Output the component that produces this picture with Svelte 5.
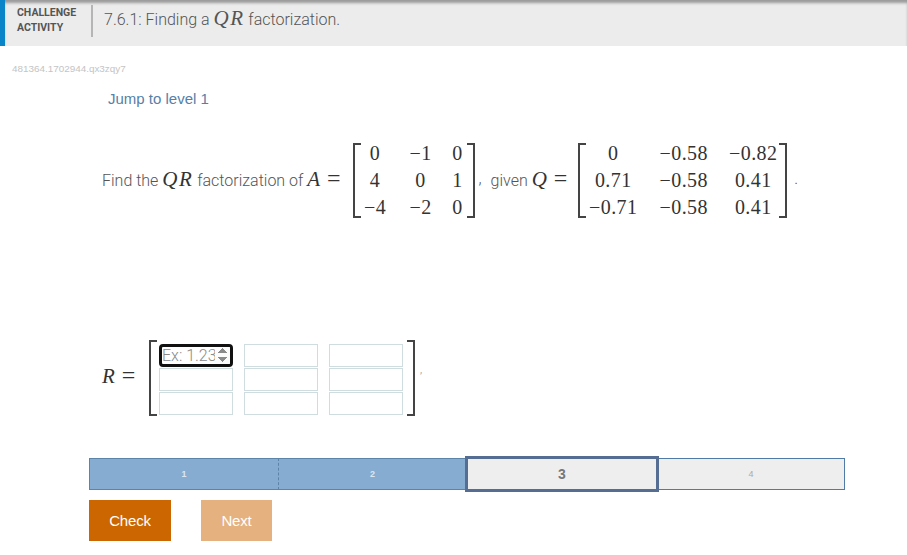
<script>
	const levels = [
		{ n: 1, state: 'done' },
		{ n: 2, state: 'done' },
		{ n: 3, state: 'current' },
		{ n: 4, state: 'todo' },
	];

	const matrixA = [
		['0', '−1', '0'],
		['4', '0', '1'],
		['−4', '−2', '0'],
	];

	const matrixQ = [
		['0', '−0.58', '−0.82'],
		['0.71', '−0.58', '0.41'],
		['−0.71', '−0.58', '0.41'],
	];

	const answerCells = [0, 1, 2, 3, 4, 5, 6, 7, 8];
</script>

<div class="activity">
	<header class="title-bar">
		<div class="badge">CHALLENGE<br />ACTIVITY</div>
		<h1 class="title">7.6.1: Finding a <span class="qr">QR</span> factorization.</h1>
	</header>

	<div class="seed">481364.1702944.qx3zqy7</div>
	<a class="jump" href="#level1">Jump to level 1</a>

	<div class="question">
		<span class="text">Find the <span class="mi word">QR</span> factorization of <span class="mi big">A</span> <span class="eq">=</span></span>
		<div class="matrix a">
			{#each matrixA as row}
				{#each row as cell}
					<span>{cell}</span>
				{/each}
			{/each}
		</div>
		<span class="text comma">,</span>
		<span class="text given">given <span class="mi big">Q</span> <span class="eq">=</span></span>
		<div class="matrix q">
			{#each matrixQ as row}
				{#each row as cell}
					<span>{cell}</span>
				{/each}
			{/each}
		</div>
		<span class="text dot">.</span>
	</div>

	<div class="answer">
		<span class="r-label"><span class="mi big">R</span> <span class="eq">=</span></span>
		<div class="input-matrix">
			{#each answerCells as i}
				{#if i === 0}
					<input class="cell focused" type="number" placeholder="Ex: 1.23" />
				{:else}
					<input class="cell" type="number" />
				{/if}
			{/each}
		</div>
		<span class="tick">,</span>
	</div>

	<div class="levels">
		{#each levels as level}
			<div class="level {level.state}">{level.n}</div>
		{/each}
	</div>

	<div class="actions">
		<button class="btn check">Check</button>
		<button class="btn next">Next</button>
	</div>
</div>

<style>
	:global(body) {
		margin: 0;
		background: #fff;
		font-family: Roboto, "Liberation Sans", sans-serif;
		color: #5b5b5b;
	}
	.activity {
		width: 907px;
		height: 555px;
		overflow: hidden;
	}
	.title-bar {
		display: flex;
		align-items: flex-start;
		height: 46px;
		box-sizing: border-box;
		background: #ececec;
		border-left: 5px solid #0a84c9;
		box-shadow: inset 0 4px 3px -1px rgba(0, 0, 0, 0.35);
		padding-top: 5px;
	}
	.badge {
		width: 88px;
		height: 32px;
		box-sizing: border-box;
		font-size: 10.5px;
		font-weight: 700;
		line-height: 15px;
		color: #555;
		padding: 0 0 0 12px;
		border-right: 2px solid #b5b5b5;
	}
	.title {
		margin: 0 0 0 11px;
		font-size: 16px;
		line-height: 30px;
		font-weight: 300;
		color: #555;
	}
	.qr {
		font-family: "Liberation Serif", serif;
		font-style: italic;
		font-size: 21px;
		letter-spacing: 1.5px;
		line-height: 20px;
	}
	.seed {
		margin: 17px 0 0 12px;
		font-family: "Liberation Sans", sans-serif;
		font-size: 9.9px;
		line-height: 11px;
		color: #c4c4c4;
	}
	.jump {
		display: block;
		margin: 16px 0 0 108px;
		font-family: "Liberation Sans", sans-serif;
		font-size: 15px;
		line-height: 17px;
		color: #5780a8;
		text-decoration: none;
	}
	.question {
		display: flex;
		align-items: center;
		margin: 33px 0 0 102px;
		font-size: 16px;
		font-weight: 300;
		color: #555;
		white-space: pre;
	}
	.text {
		padding-bottom: 4px;
	}
	.mi {
		font-family: "Liberation Serif", serif;
		font-style: italic;
		font-weight: 400;
		color: #333;
		line-height: 20px;
	}
	.big {
		font-size: 21px;
	}
	.word {
		font-size: 21px;
		letter-spacing: 1.5px;
	}
	.eq {
		margin-left: 3px;
		font-family: "Liberation Serif", serif;
		font-size: 24px;
		font-weight: 400;
		color: #333;
		line-height: 20px;
	}
	.matrix {
		position: relative;
		display: grid;
		grid-auto-rows: 27px;
		align-items: center;
		justify-items: center;
		font-family: "Liberation Serif", serif;
		font-size: 20px;
		letter-spacing: 0.4px;
		font-weight: 400;
		color: #333;
		height: 81px;
	}
	.matrix::before,
	.matrix::after,
	.input-matrix::before,
	.input-matrix::after {
		content: "";
		position: absolute;
		top: 3px;
		bottom: 3px;
		width: 6px;
		border: 2px solid #444;
	}
	.matrix::before,
	.input-matrix::before {
		left: 0;
		border-right: none;
	}
	.matrix::after,
	.input-matrix::after {
		right: 0;
		border-left: none;
	}
	.matrix.a {
		margin-left: 12px;
		grid-template-columns: 45px 46px 28px;
		width: 122px;
	}
	.comma {
		margin-left: 4px;
	}
	.given {
		margin-left: 9px;
	}
	.matrix.q {
		margin-left: 11px;
		grid-template-columns: 70px 71px 68px;
		width: 209px;
	}
	.dot {
		margin-left: 7px;
	}
	.answer {
		display: flex;
		align-items: center;
		margin: 119px 0 0 102px;
	}
	.r-label {
		width: 47px;
		flex: none;
		padding-bottom: 5px;
	}
	.input-matrix {
		position: relative;
		display: grid;
		grid-template-columns: repeat(3, 74px);
		grid-auto-rows: 23px;
		column-gap: 11px;
		row-gap: 1px;
		padding: 4px 12px 1px 10px;
	}
	.input-matrix::before,
	.input-matrix::after {
		top: 0;
		bottom: 0;
	}
	.cell {
		box-sizing: border-box;
		width: 74px;
		height: 23px;
		margin: 0;
		padding: 0;
		border: 1px solid #cfdde0;
		background: #fff;
		font-family: Roboto, sans-serif;
		font-weight: 300;
		font-size: 16px;
		outline: none;
	}
	.cell::placeholder {
		color: #8a8a8a;
		font-weight: 300;
	}
	.cell.focused {
		border: 3px solid #111;
		border-radius: 4px;
	}
	.focused::-webkit-inner-spin-button {
		opacity: 1;
	}
	.tick {
		margin: 0 0 18px 5px;
		color: #aaa;
		font-size: 11px;
	}
	.levels {
		display: grid;
		grid-template-columns: 190px 187px 192px 187px;
		width: 756px;
		height: 32px;
		margin: 42px 0 0 89px;
	}
	.level {
		box-sizing: border-box;
		display: flex;
		align-items: center;
		justify-content: center;
		font-family: "Liberation Sans", sans-serif;
		font-size: 9px;
		border: 1px solid #5c83a8;
	}
	.level.done {
		background: #87acd2;
		color: #dbe6f1;
		font-weight: 700;
	}
	.level.done:first-child {
		border-right: 1px dashed #5c83a8;
	}
	.level.done:nth-child(2) {
		border-left: none;
		border-right: none;
	}
	.level.current {
		position: relative;
		z-index: 1;
		margin: -2px -1px;
		border: 3px solid #556d92;
		background: #eee;
		color: #777;
		font-size: 14px;
		font-weight: 700;
	}
	.level.todo {
		background: #eee;
		color: #aaa;
		border-color: #4f7ba6;
		border-left: none;
	}
	.actions {
		display: flex;
		gap: 30px;
		margin: 10px 0 0 89px;
	}
	.btn {
		height: 41px;
		border: none;
		color: #fff;
		font-family: "Liberation Sans", sans-serif;
		font-size: 15px;
		letter-spacing: -0.2px;
	}
	.check {
		width: 82px;
		background: #cc6600;
	}
	.next {
		width: 71px;
		background: #e5b17f;
	}
</style>
